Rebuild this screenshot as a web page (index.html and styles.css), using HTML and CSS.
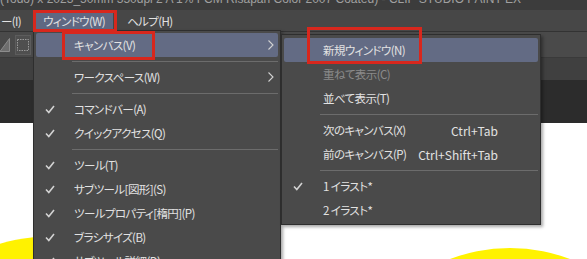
FILE: index.html
```html
<!DOCTYPE html>
<html lang="ja">

<head>
    <meta charset="UTF-8" />
    <meta name="viewport" content="width=device-width, initial-scale=1.0" />
    <title>CLIP STUDIO PAINT EX</title>
    <link rel="stylesheet" href="styles.css">
</head>

<body>
    <div class="app">
        <div class="titlebar"><span>(Todo) x 2023_50mm 350dpi 2 A 1% FCM Risapan Color 2007 Coated) - CLIP STUDIO PAINT EX</span></div>

        <div class="menubar">
            <div class="mi first">ー(I)</div>
            <div class="mi active">ウィンドウ(W)</div>
            <div class="mi">ヘルプ(H)</div>
        </div>

        <div class="toolbar">
            <svg class="tool-icon" width="10" height="14" viewBox="0 0 10 14">
                <polygon points="0,13.5 9.5,13.5 9.5,0.5" fill="#6e6e6e" stroke="#8c8c8c" />
            </svg>
            <div class="tool-btn">
                <svg width="12" height="12" viewBox="0 0 12 12">
                    <rect x="0.5" y="0.5" width="11" height="11" fill="none" stroke="#9a9a9a" stroke-dasharray="1.5 1" />
                </svg>
            </div>
        </div>

        <div class="tabbar"></div>

        <div class="workspace">
            <div class="canvas">
                <div class="blob blob-left"></div>
                <div class="blob blob-right"></div>
            </div>
        </div>

        <!-- ウィンドウ menu -->
        <div class="menu main">
            <div class="item hl">
                <span class="ck"></span>
                <span class="label">キャンバス(V)</span>
                <svg class="arr" width="6" height="10" viewBox="0 0 6 10"><path d="M0.5 0.5L5 5L0.5 9.5" /></svg>
            </div>
            <div class="sep"></div>
            <div class="item">
                <span class="ck"></span>
                <span class="label">ワークスペース(W)</span>
                <svg class="arr" width="6" height="10" viewBox="0 0 6 10"><path d="M0.5 0.5L5 5L0.5 9.5" /></svg>
            </div>
            <div class="sep"></div>
            <div class="item">
                <span class="ck"><svg width="10" height="9" viewBox="0 0 10 9"><path d="M1 4.5L3.8 7.5L9 1" /></svg></span>
                <span class="label">コマンドバー(A)</span>
            </div>
            <div class="item">
                <span class="ck"><svg width="10" height="9" viewBox="0 0 10 9"><path d="M1 4.5L3.8 7.5L9 1" /></svg></span>
                <span class="label">クイックアクセス(Q)</span>
            </div>
            <div class="sep"></div>
            <div class="item">
                <span class="ck"><svg width="10" height="9" viewBox="0 0 10 9"><path d="M1 4.5L3.8 7.5L9 1" /></svg></span>
                <span class="label">ツール(T)</span>
            </div>
            <div class="item">
                <span class="ck"><svg width="10" height="9" viewBox="0 0 10 9"><path d="M1 4.5L3.8 7.5L9 1" /></svg></span>
                <span class="label">サブツール[図形](S)</span>
            </div>
            <div class="item">
                <span class="ck"><svg width="10" height="9" viewBox="0 0 10 9"><path d="M1 4.5L3.8 7.5L9 1" /></svg></span>
                <span class="label">ツールプロパティ[楕円](P)</span>
            </div>
            <div class="item">
                <span class="ck"><svg width="10" height="9" viewBox="0 0 10 9"><path d="M1 4.5L3.8 7.5L9 1" /></svg></span>
                <span class="label">ブラシサイズ(B)</span>
            </div>
            <div class="item">
                <span class="ck"><svg width="10" height="9" viewBox="0 0 10 9"><path d="M1 4.5L3.8 7.5L9 1" /></svg></span>
                <span class="label">サブツール詳細(D)</span>
            </div>
        </div>

        <!-- キャンバス submenu -->
        <div class="menu sub">
            <div class="item hl">
                <span class="ck"></span>
                <span class="label">新規ウィンドウ(N)</span>
            </div>
            <div class="item dis">
                <span class="ck"></span>
                <span class="label">重ねて表示(C)</span>
            </div>
            <div class="item">
                <span class="ck"></span>
                <span class="label">並べて表示(T)</span>
            </div>
            <div class="sep"></div>
            <div class="item">
                <span class="ck"></span>
                <span class="label">次のキャンバス(X)</span>
                <span class="key">Ctrl+Tab</span>
            </div>
            <div class="item">
                <span class="ck"></span>
                <span class="label">前のキャンバス(P)</span>
                <span class="key">Ctrl+Shift+Tab</span>
            </div>
            <div class="sep"></div>
            <div class="item">
                <span class="ck"><svg width="10" height="9" viewBox="0 0 10 9"><path d="M1 4.5L3.8 7.5L9 1" /></svg></span>
                <span class="label">1 イラスト*</span>
            </div>
            <div class="item">
                <span class="ck"></span>
                <span class="label">2 イラスト*</span>
            </div>
        </div>

        <!-- red callouts -->
        <div class="mark mark-window"></div>
        <div class="mark mark-canvas"></div>
        <div class="mark mark-new"></div>
    </div>
</body>

</html>
```

FILE: styles.css
```css
body {
    margin: 0;
    background: #2d2d2d;
    font-family: "Noto Sans CJK JP", "Noto Sans", sans-serif;
    font-size: 11.5px;
    letter-spacing: -0.6px;
    font-feature-settings: "palt";
    color: #e2e2e2;
    overflow: hidden;
}

.app {
    position: relative;
    width: 587px;
    height: 259px;
    overflow: hidden;
    display: flex;
    flex-direction: column;
}

.titlebar {
    height: 10px;
    flex: none;
    background: #3c3c3c;
    overflow: hidden;
    color: #a0a0a0;
    font-family: "Liberation Sans", sans-serif;
    font-size: 12px;
    letter-spacing: 0;
    line-height: 12px;
    white-space: nowrap;
}

.titlebar span {
    display: block;
    margin-top: -7px;
}

.menubar {
    height: 21px;
    flex: none;
    background: #474747;
    border-bottom: 1px solid #333;
    display: flex;
    align-items: center;
    gap: 6px;
    white-space: nowrap;
}

.mi {
    height: 18px;
    line-height: 18px;
    padding: 0 8px;
}

.mi.first {
    margin-left: -7px;
}

.mi.active {
    background: #5f6882;
}

.toolbar {
    height: 25px;
    flex: none;
    background: #4a4a4a;
    border-bottom: 1px solid #3a3a3a;
    display: flex;
    align-items: center;
    gap: 5px;
}

.tool-btn {
    width: 14px;
    height: 18px;
    border: 1px solid #5c5c5c;
    background: #4f4f4f;
    display: flex;
    align-items: center;
    justify-content: center;
}

.tabbar {
    height: 22px;
    flex: none;
    background: #404040;
}

.workspace {
    flex: 1;
    background: #2c2c2c;
}

.canvas {
    margin-top: 43px;
    height: 200px;
    background: #fff;
    position: relative;
    overflow: hidden;
}

.blob {
    position: absolute;
    border-radius: 50%;
    background: #fff200;
}

.blob-left {
    left: -145px;
    top: 113px;
    width: 400px;
    height: 400px;
}

.blob-right {
    left: 341px;
    top: 125px;
    width: 338px;
    height: 338px;
}

/* menus */

.menu {
    position: absolute;
    background: #4a4a4a;
    border: 1px solid #2e2e2e;
    box-shadow: 2px 2px 3px rgba(0, 0, 0, 0.35);
    white-space: nowrap;
}

.menu.main {
    left: 33px;
    top: 30px;
    width: 242px;
    padding: 2px;
}

.menu.sub {
    left: 281px;
    top: 34px;
    width: 254px;
    padding: 3px 2px 2px;
}

.item {
    height: 24px;
    display: flex;
    align-items: center;
}

.item.hl {
    background: #636b84;
    border-radius: 2px;
}

.item.dis {
    color: #8a8a8a;
}

.ck {
    width: 38px;
    flex: none;
    display: flex;
    align-items: center;
}

.sub .ck {
    width: 39px;
}

.ck svg {
    margin-left: 9px;
}

.ck path,
.arr path {
    fill: none;
    stroke: #d2d2d2;
    stroke-width: 1.6;
}

.arr path {
    stroke-width: 1.1;
}

.label {
    flex: 1;
}

.key {
    padding-right: 40px;
    font-size: 12px;
    letter-spacing: 0;
}

.arr {
    margin-right: 4px;
}

.sep {
    height: 8px;
    display: flex;
    align-items: center;
    padding-left: 36px;
}

.sep::after {
    content: "";
    flex: 1;
    height: 1px;
    background: #6c6c6c;
}

/* red callouts */

.mark {
    position: absolute;
    box-sizing: border-box;
    border: 3px solid #d8271d;
}

.mark-window {
    left: 33px;
    top: 10px;
    width: 84px;
    height: 22px;
}

.mark-canvas {
    left: 62px;
    top: 31px;
    width: 93px;
    height: 29px;
}

.mark-new {
    left: 307px;
    top: 27px;
    width: 115px;
    height: 37px;
}
```
